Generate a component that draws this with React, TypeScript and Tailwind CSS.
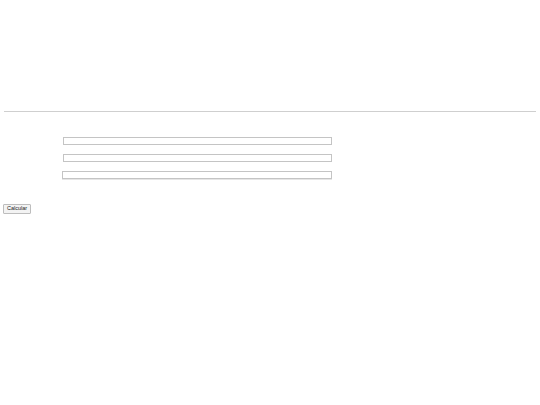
import React from 'react';

const App: React.FC = () => {
  return (
    <div className="w-[540px] h-[405px] bg-white" style={{ fontFamily: '"Liberation Sans", Arial, sans-serif' }}>
      <div className="h-[111px]" />
      <hr className="mx-[4px] border-0 border-t border-[#cfcfcf]" />
      <div className="h-[25px]" />
      <div className="flex flex-col gap-[9px] pl-[63px]">
        <input type="text" className="w-[269px] h-[8px] border border-[#c4c4c4] bg-white" />
        <input type="text" className="w-[269px] h-[8px] border border-[#c4c4c4] bg-white" />
        <input type="text" className="-ml-px w-[270px] h-[8px] border border-[#c4c4c4] shadow-[0_1px_0_#e6e6e6] bg-white" />
      </div>
      <div className="h-[25px]" />
      <button className="ml-[3px] h-[10px] w-[28px] border border-[#bdbdbd] rounded-[1px] bg-[#f3f3f3] text-[5.5px] leading-none text-[#222] flex items-center justify-center">
        Calcular
      </button>
    </div>
  );
};

export default App;
